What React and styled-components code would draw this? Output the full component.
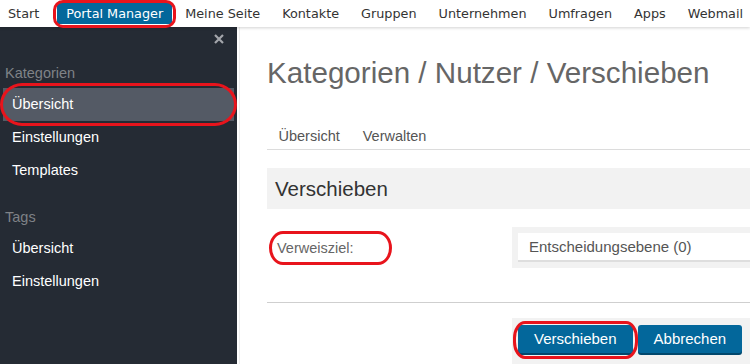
import React from 'react';
import styled, { createGlobalStyle } from 'styled-components';

const navItems = ['Start', 'Portal Manager', 'Meine Seite', 'Kontakte', 'Gruppen', 'Unternehmen', 'Umfragen', 'Apps', 'Webmail'];

const sections = [
  { title: 'Kategorien', items: ['Übersicht', 'Einstellungen', 'Templates'], active: 0 },
  { title: 'Tags', items: ['Übersicht', 'Einstellungen'], active: -1 },
];

const App = () => {
  return (
    <>
      <GlobalStyle />
      <Page>
        <TopNav>
          {navItems.map((item) => (
            <NavItem key={item} $active={item === 'Portal Manager'}>
              {item}
              {item === 'Portal Manager' && <Marker $pad="-3px -4px -4px -4px" />}
            </NavItem>
          ))}
        </TopNav>

        <Body>
          <Sidebar>
            <SidebarTop>
              <svg width="10" height="10" viewBox="0 0 10 10">
                <path d="M1 1 L9 9 M9 1 L1 9" stroke="#a3a6ab" strokeWidth="2.2" />
              </svg>
            </SidebarTop>
            {sections.map((section) => (
              <Section key={section.title}>
                <SectionTitle>{section.title}</SectionTitle>
                {section.items.map((item, i) => (
                  <SideItem key={item} $active={i === section.active}>
                    {item}
                    {i === section.active && <Marker $pad="-5px -3px -5px -3px" $radius="22px / 50%" />}
                  </SideItem>
                ))}
              </Section>
            ))}
          </Sidebar>

          <Main>
            <Title>Kategorien / Nutzer / Verschieben</Title>
            <Tabs>
              <Tab>Übersicht</Tab>
              <Tab>Verwalten</Tab>
            </Tabs>

            <PanelHeading>Verschieben</PanelHeading>

            <FormRow>
              <Label>
                <LabelText>
                  Verweisziel:
                  <Marker $pad="-9px -38px -9px -8px" $radius="14px / 50%" />
                </LabelText>
              </Label>
              <SelectWrap>
                <SelectBox>Entscheidungsebene (0)</SelectBox>
              </SelectWrap>
            </FormRow>

            <Divider />

            <Actions>
              <Button>
                Verschieben
                <Marker $pad="-4px -5px -6px -5px" $radius="12px / 45%" />
              </Button>
              <Button>Abbrechen</Button>
            </Actions>
          </Main>
        </Body>
      </Page>
    </>
  );
};

export default App;

// -------------------- CSS -------------------- //

const GlobalStyle = createGlobalStyle`
  html, body {
    margin: 0;
    padding: 0;
    background: #fff;
    overflow: hidden;
  }
  body {
    font-family: "Liberation Sans", Arial, sans-serif;
  }
`;

const Page = styled.div`
  width: 750px;
  height: 364px;
  overflow: hidden;
  display: flex;
  flex-direction: column;
  font-family: "Liberation Sans", Arial, sans-serif;
`;

const TopNav = styled.div`
  position: relative;
  z-index: 2;
  height: 27px;
  flex-shrink: 0;
  display: flex;
  align-items: center;
  gap: 4px;
  margin-left: -1px;
  background: #fff;
  box-shadow: 0 1px 3px rgba(0, 0, 0, 0.18);
  font-family: "DejaVu Sans", Verdana, sans-serif;
  font-size: 12.8px;
  white-space: nowrap;
`;

const NavItem = styled.div`
  position: relative;
  height: 21px;
  line-height: 21px;
  padding: 0 9px;
  margin-top: -1px;
  margin-left: ${(p) => (p.$active ? '5px' : '0')};
  color: ${(p) => (p.$active ? '#fff' : '#333')};
  background: ${(p) => (p.$active ? '#03679b' : 'transparent')};
`;

const Marker = styled.span`
  position: absolute;
  inset: ${(p) => p.$pad};
  border: 3px solid #e8141c;
  border-radius: ${(p) => p.$radius || '10px'};
  pointer-events: none;
`;

const Body = styled.div`
  flex: 1;
  display: flex;
  min-height: 0;
`;

const Sidebar = styled.div`
  width: 237px;
  flex-shrink: 0;
  background: #252b34;
`;

const SidebarTop = styled.div`
  height: 30px;
  display: flex;
  justify-content: flex-end;
  align-items: center;
  padding-right: 13px;
  padding-bottom: 6px;
  box-sizing: border-box;
`;

const Section = styled.div`
  margin-bottom: 14px;
`;

const SectionTitle = styled.div`
  height: 31px;
  line-height: 33px;
  padding-left: 5px;
  font-size: 14.5px;
  color: #7f8287;
`;

const SideItem = styled.div`
  position: relative;
  height: 33px;
  line-height: 32px;
  padding-left: 12px;
  margin-right: ${(p) => (p.$active ? '3px' : '0')};
  margin-left: ${(p) => (p.$active ? '3px' : '0')};
  text-indent: ${(p) => (p.$active ? '-3px' : '0')};
  font-size: 14.5px;
  color: #fff;
  background: ${(p) => (p.$active ? '#545a65' : 'transparent')};
`;

const Main = styled.div`
  flex: 1;
  min-width: 0;
  padding: 28px 0 0 27px;
  border-left: 1px solid #eee;
  margin-left: 2px;
  box-sizing: border-box;
`;

const Title = styled.h1`
  margin: 0;
  height: 36px;
  line-height: 36px;
  font-size: 29.6px;
  font-weight: normal;
  color: #666;
  white-space: nowrap;
`;

const Tabs = styled.div`
  display: flex;
  margin-top: 32px;
  width: 600px;
  border-bottom: 1px solid #dcdcdc;
`;

const Tab = styled.div`
  height: 26px;
  line-height: 26px;
  padding: 0 11.5px;
  font-size: 14.5px;
  color: #555;
`;

const PanelHeading = styled.div`
  margin-top: 18px;
  width: 600px;
  height: 41px;
  line-height: 41px;
  padding-left: 8px;
  box-sizing: border-box;
  background: #f2f2f2;
  font-size: 20.5px;
  color: #333;
`;

const FormRow = styled.div`
  display: flex;
  align-items: center;
  margin-top: 18px;
`;

const Label = styled.div`
  width: 245px;
  flex-shrink: 0;
  padding-left: 10px;
  box-sizing: border-box;
`;

const LabelText = styled.span`
  position: relative;
  font-size: 14.5px;
  color: #666;
`;

const SelectWrap = styled.div`
  width: 360px;
  flex-shrink: 0;
  padding: 6px 0 8px 6px;
  background: #f2f2f2;
`;

const SelectBox = styled.div`
  height: 27px;
  line-height: 27px;
  padding-left: 11px;
  background: #fff;
  box-shadow: 0 2px 0 #dedede;
  font-size: 15px;
  color: #555;
`;

const Divider = styled.div`
  margin-top: 34px;
  width: 600px;
  height: 1px;
  background: #cfcfcf;
`;

const Actions = styled.div`
  display: flex;
  gap: 5px;
  margin: 15px 0 0 245px;
  width: 360px;
  height: 60px;
  padding: 7px 0 0 6px;
  box-sizing: border-box;
  background: #f2f2f2;
`;

const Button = styled.div`
  position: relative;
  height: 28px;
  line-height: 27px;
  padding: 0 16px;
  border-radius: 3px;
  background: #03679b;
  box-shadow: 0 2px 0 #01476c;
  font-size: 15px;
  color: #fff;
  white-space: nowrap;
`;
